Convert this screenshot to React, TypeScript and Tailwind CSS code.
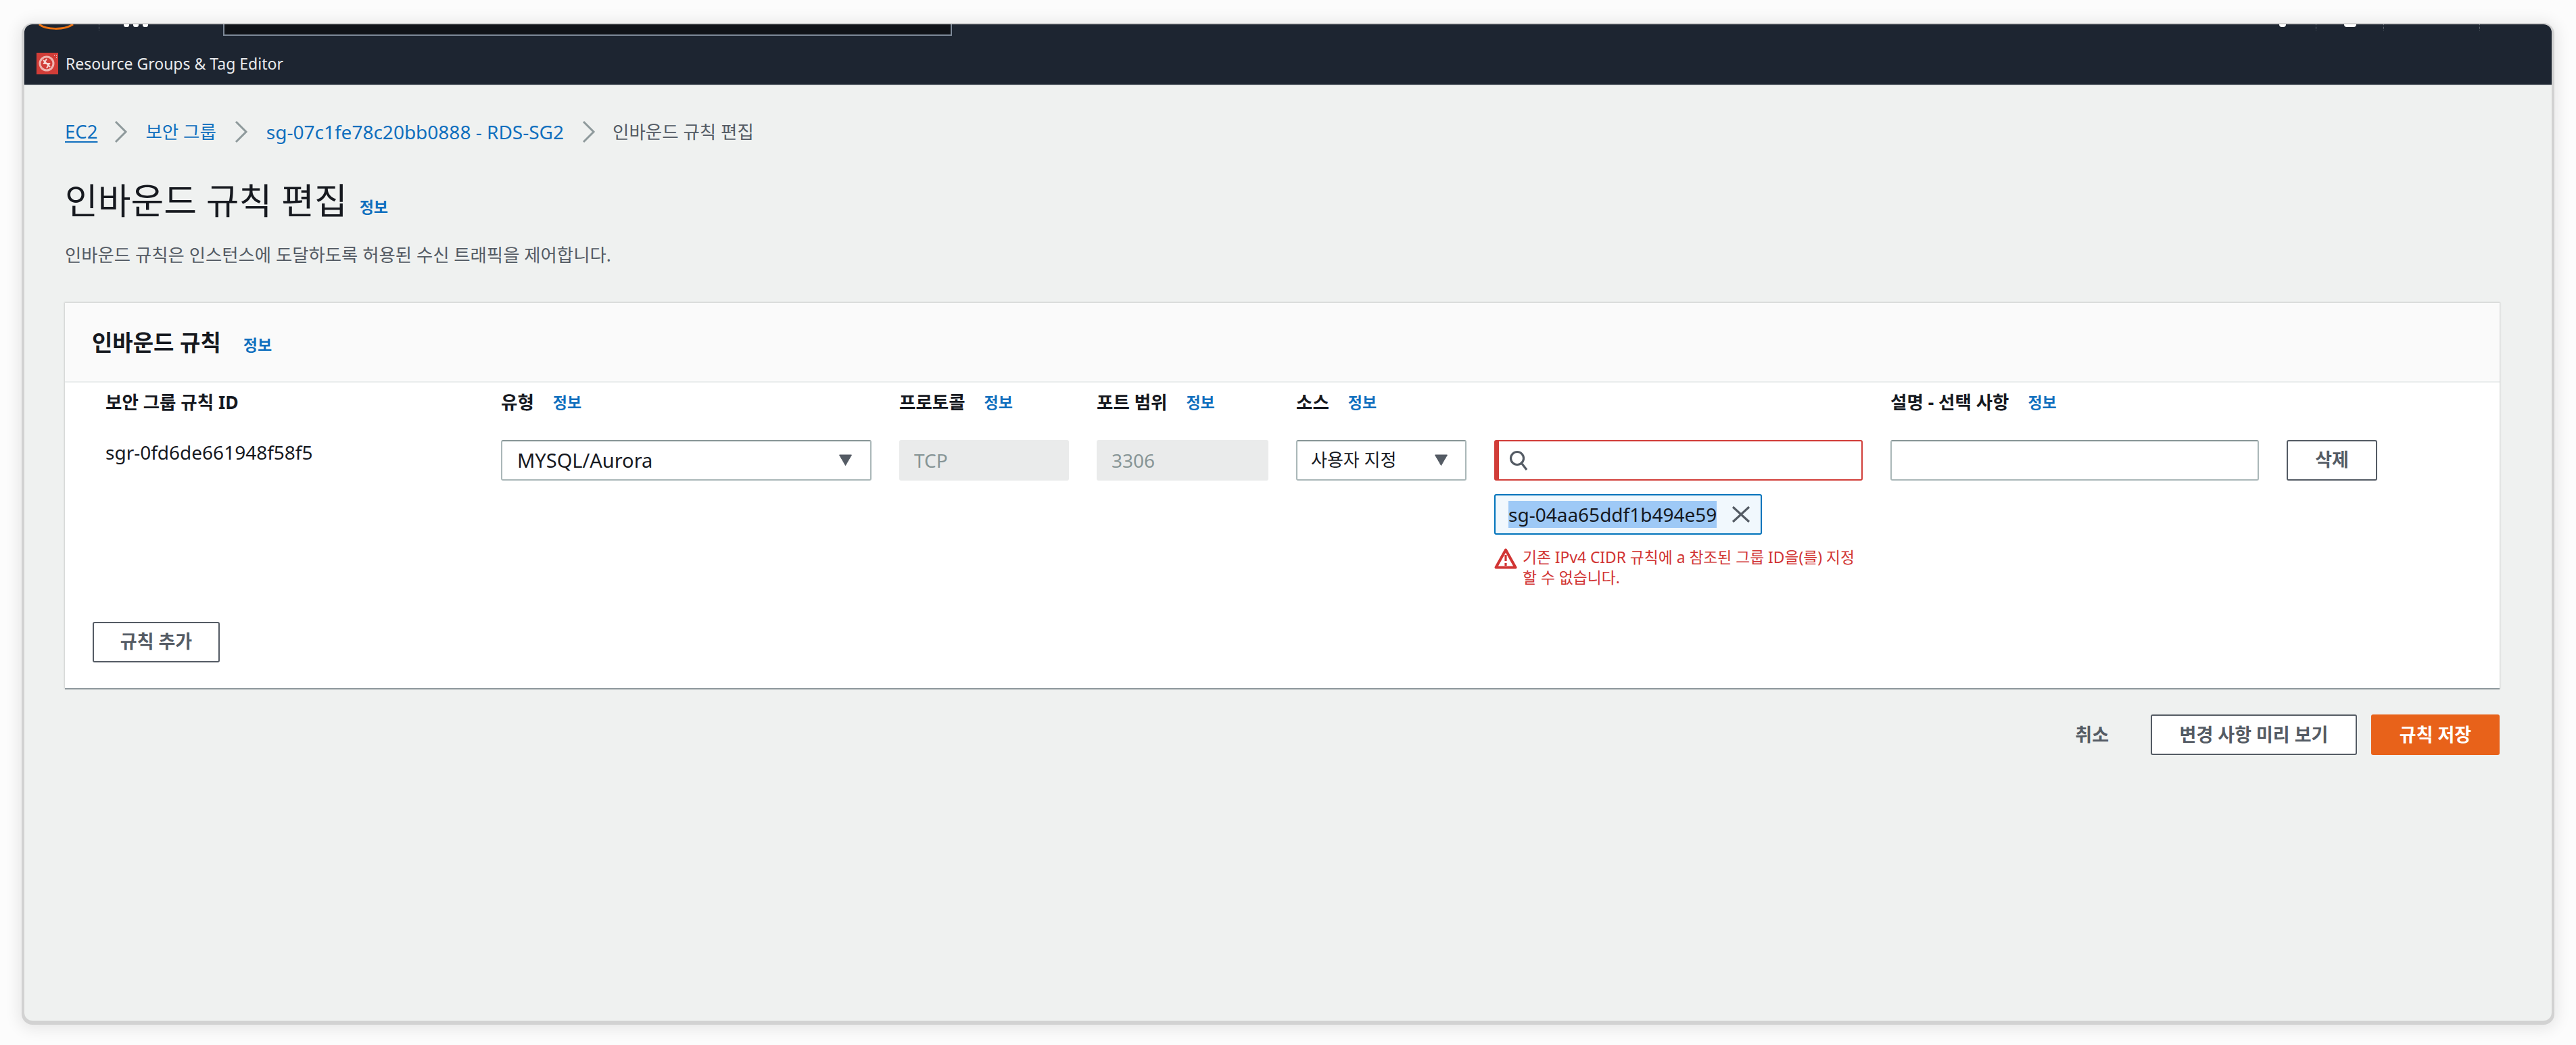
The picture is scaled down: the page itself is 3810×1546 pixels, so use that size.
import React from 'react';

const Info = ({ className = '' }: { className?: string }) => (
  <a className={`text-[23px] font-bold leading-none text-[#0f6fbe] ${className}`}>정보</a>
);

const Chevron = () => (
  <svg width="22" height="34" viewBox="0 0 22 34" fill="none" className="shrink-0">
    <path d="M3 2 L18 17 L3 32" stroke="#8f9a9c" strokeWidth="3" />
  </svg>
);

const Caret = () => (
  <svg width="21" height="17" viewBox="0 0 21 17" className="shrink-0">
    <path d="M1.5 1 H19.5 L10.5 16.5 Z" fill="#545b64" stroke="#545b64" strokeWidth="1" strokeLinejoin="round" />
  </svg>
);

const ColumnHead = ({ label, gap = 'ml-[28px]' }: { label: string; gap?: string }) => (
  <div className="flex items-center whitespace-nowrap">
    <span className="text-[26.5px] font-bold leading-none text-[#16191f]">{label}</span>
    <Info className={gap} />
  </div>
);

const ReadOnlyField = ({ value }: { value: string }) => (
  <div className="flex h-[60px] items-center rounded-[3px] bg-[#eaebeb] pl-[22px] text-[28px] text-[#879596]">{value}</div>
);

const Sep = ({ className = '' }: { className?: string }) => (
  <div className={`h-[9px] border-l border-dotted border-[#687078] ${className}`} />
);

export default function App() {
  return (
    <div className="h-[1546px] w-[3810px] overflow-hidden bg-[#fcfcfc] pl-[36px] pt-[36px] font-['Noto_Sans','Noto_Sans_CJK_KR',sans-serif]">
      <div className="flex h-[1474px] w-[3738px] flex-col overflow-hidden rounded-[12px] bg-[#eff1f0] shadow-[0_2px_0_4px_#d2d2d2,0_4px_22px_8px_rgba(0,0,0,0.09)]">
        {/* Top nav, cut off by the capture */}
        <header className="h-[90px] shrink-0 border-b-2 border-[#545b64] bg-[#1d2531]">
          <div className="flex h-[42px] items-start">
            <svg width="54" height="8" viewBox="0 0 54 8" className="ml-[21px]">
              <path d="M1 0 C10 8 38 9 51 0" stroke="#ec7211" strokeWidth="3" fill="none" />
            </svg>
            <Sep className="ml-[35px]" />
            <div className="ml-[36px] flex gap-[6px]">
              <span className="h-[4px] w-[8px] rounded-b-[3px] bg-white" />
              <span className="h-[4px] w-[8px] rounded-b-[3px] bg-white" />
              <span className="h-[4px] w-[8px] rounded-b-[3px] bg-white" />
            </div>
            <div className="ml-[111px] h-[17px] w-[1078px] border-x-2 border-b-2 border-[#7d8998] bg-[#101318]" />
            <span className="ml-[1963px] h-[4px] w-[10px] rounded-b-full bg-white" />
            <Sep className="ml-[44px]" />
            <span className="ml-[41px] h-[4px] w-[18px] rounded-b-full bg-white" />
            <Sep className="ml-[40px]" />
            <Sep className="ml-[141px]" />
          </div>
          <div className="mt-0 flex items-center pl-[18px]">
            <svg width="32" height="32" viewBox="0 0 32 32" className="shrink-0">
              <rect width="32" height="32" fill="#d13d38" />
              <circle cx="15" cy="16" r="10" fill="none" stroke="#eeb4af" strokeWidth="3" />
              <path d="M15 9 L11 16 H19 L15 23 M10 11 L20 21" stroke="#f6d8d5" strokeWidth="2" fill="none" />
              <path d="M26 4 h1 M29 4 h1 M29 7 h1" stroke="#f3c5c1" strokeWidth="1.5" />
            </svg>
            <span className="ml-[11px] text-[23px] leading-none text-[#e9ebed]">Resource Groups &amp; Tag Editor</span>
          </div>
        </header>

        <main className="flex flex-1 flex-col pl-[60px] pr-[77px]">
          {/* Breadcrumbs */}
          <nav className="mt-[52px] flex h-[34px] items-center text-[26.5px] leading-none">
            <a className="text-[27.5px] text-[#0f6fbe] underline underline-offset-4">EC2</a>
            <span className="ml-[24px]"><Chevron /></span>
            <a className="ml-[25px] text-[#0f6fbe]">보안 그룹</a>
            <span className="ml-[26px]"><Chevron /></span>
            <a className="ml-[26px] text-[28px] text-[#0f6fbe]">sg-07c1fe78c20bb0888 - RDS-SG2</a>
            <span className="ml-[26px]"><Chevron /></span>
            <span className="ml-[24px] text-[#545b64]">인바운드 규칙 편집</span>
          </nav>

          {/* Page title */}
          <div className="mt-[55px] flex h-[60px] items-end">
            <h1 className="text-[53px] font-normal leading-[60px] text-[#16191f]">인바운드 규칙 편집</h1>
            <Info className="mb-[9px] ml-[18px]" />
          </div>
          <p className="mt-[33px] text-[26.4px] leading-[34px] text-[#545b64]">인바운드 규칙은 인스턴스에 도달하도록 허용된 수신 트래픽을 제어합니다.</p>

          {/* Rules card */}
          <section className="mt-[54px] h-[570px] bg-white shadow-[0_2px_0_0_#8d979c,0_0_2px_1px_rgba(0,0,0,0.14)]">
            <div className="flex h-[118px] items-center border-b-2 border-[#eaeded] bg-[#fafafa] pl-[40px]">
              <h2 className="text-[33px] font-bold leading-none text-[#16191f]">인바운드 규칙</h2>
              <Info className="ml-[33px] mt-[8px]" />
            </div>

            <div className="pl-[60px] pt-[16px]">
              <div className="grid grid-cols-[544px_548px_251px_254px_252px_545px_545px_134px] gap-x-[41px]">
                <ColumnHead label="보안 그룹 규칙 ID" gap="hidden" />
                <ColumnHead label="유형" />
                <ColumnHead label="프로토콜" />
                <ColumnHead label="포트 범위" />
                <ColumnHead label="소스" />
                <div />
                <ColumnHead label="설명 - 선택 사항" />
                <div />
              </div>

              <div className="mt-[42px] grid grid-cols-[544px_548px_251px_254px_252px_545px_545px_134px] items-start gap-x-[41px]">
                <div className="text-[28px] leading-[36px] text-[#16191f]">sgr-0fd6de661948f58f5</div>

                <div className="flex h-[60px] items-center justify-between rounded-[3px] border-2 border-[#aab7b8] border-t-[#879596] bg-white pl-[22px] pr-[26px] text-[29px] text-[#16191f]">
                  <span>MYSQL/Aurora</span>
                  <Caret />
                </div>

                <ReadOnlyField value="TCP" />
                <ReadOnlyField value="3306" />

                <div className="flex h-[60px] items-center justify-between rounded-[3px] border-2 border-[#aab7b8] border-t-[#879596] bg-white pl-[20px] pr-[25px] text-[26px] text-[#16191f]">
                  <span>사용자 지정</span>
                  <Caret />
                </div>

                {/* Source search + token + error */}
                <div>
                  <div className="flex h-[60px] items-center rounded-[3px] border-[2.5px] border-l-[7px] border-[#d13d38] bg-white pl-[14px]">
                    <svg width="30" height="34" viewBox="0 0 30 34" fill="none">
                      <circle cx="13" cy="14" r="9.5" stroke="#545b64" strokeWidth="3.2" />
                      <path d="M20 22 L27 31" stroke="#545b64" strokeWidth="3.2" />
                    </svg>
                  </div>
                  <div className="mt-[20px] flex h-[60px] w-[396px] items-center rounded-[3px] border-[2.5px] border-[#0073bb] bg-[#f1f8fd] pl-[19px]">
                    <span className="bg-[#9ec9f6] text-[28px] leading-[40px] text-[#16191f]">sg-04aa65ddf1b494e59</span>
                    <svg width="28" height="26" viewBox="0 0 28 26" className="ml-[22px]" fill="none">
                      <path d="M2 2 L26 24 M26 2 L2 24" stroke="#545b64" strokeWidth="3.2" />
                    </svg>
                  </div>
                  <div className="mt-[19px] flex items-start">
                    <svg width="34" height="32" viewBox="0 0 34 32" fill="none" className="shrink-0">
                      <path d="M17 3.5 L31.5 29.5 H2.5 Z" stroke="#d13433" strokeWidth="4" strokeLinejoin="round" />
                      <path d="M17 11 V20 M17 23 V27" stroke="#d13433" strokeWidth="3.2" />
                    </svg>
                    <p className="ml-[8px] whitespace-nowrap text-[22.8px] leading-[30px] text-[#d13433]">기존 IPv4 CIDR 규칙에 a 참조된 그룹 ID을(를) 지정<br />할 수 없습니다.</p>
                  </div>
                </div>

                <div className="h-[60px] rounded-[3px] border-2 border-[#aab7b8] border-t-[#879596] bg-white" />

                <button className="flex h-[60px] items-center justify-center rounded-[3px] border-[2.5px] border-[#545b64] bg-white text-[27px] font-bold text-[#545b64]">삭제</button>
              </div>
            </div>

            <div className="pl-[41px]">
              <button className="mt-[50px] flex h-[60px] w-[188px] items-center justify-center rounded-[3px] border-[2.5px] border-[#545b64] bg-white text-[27px] font-bold text-[#545b64]">규칙 추가</button>
            </div>
          </section>

          {/* Footer actions */}
          <div className="mt-[39px] flex items-center justify-end">
            <span className="text-[27px] font-bold text-[#545b64]">취소</span>
            <button className="ml-[62px] flex h-[60px] w-[305px] items-center justify-center rounded-[3px] border-[2.5px] border-[#545b64] bg-white text-[27px] font-bold text-[#545b64]">변경 사항 미리 보기</button>
            <button className="ml-[21px] flex h-[60px] w-[190px] items-center justify-center rounded-[3px] bg-[#e8621a] text-[27px] font-bold text-white">규칙 저장</button>
          </div>
        </main>
      </div>
    </div>
  );
}
